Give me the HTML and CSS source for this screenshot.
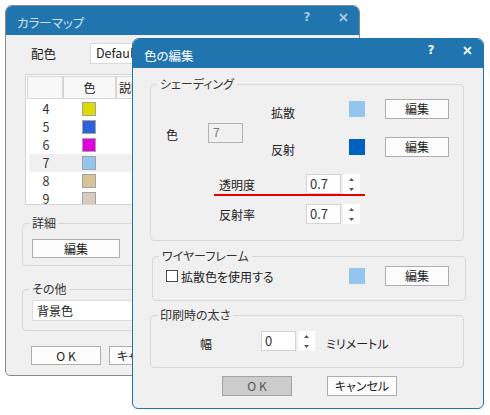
FILE: index.html
```html
<!DOCTYPE html>
<html lang="ja">
<head>
<meta charset="utf-8">
<title>色の編集</title>
<link rel="stylesheet" href="styles.css">
</head>
<body>
<div class="desk">
  <section class="win back">
    <header class="titlebar">
      <span class="title">カラーマップ</span>
      <span class="tb-icons">
        <span class="tb-btn tb-help">?</span>
        <span class="tb-btn"><svg class="tb-x" width="9" height="9" viewBox="0 0 9 9"><path d="M1 1L8 8M8 1L1 8"/></svg></span>
      </span>
    </header>
    <div class="body back-body">
      <div class="scheme"><span class="scheme-lbl">配色</span><div class="combo">Default</div></div>
      <div class="table">
        <div class="thead"><div class="th h1"></div><div class="th h2">色</div><div class="th h3">説明</div></div>
        <div class="tr"><span class="c1">4</span><span class="c2"><i class="sw" style="background:#dcdc00"></i></span></div>
        <div class="tr"><span class="c1">5</span><span class="c2"><i class="sw" style="background:#2b61dc"></i></span></div>
        <div class="tr"><span class="c1">6</span><span class="c2"><i class="sw" style="background:#e000e0"></i></span></div>
        <div class="tr sel"><span class="c1">7</span><span class="c2"><i class="sw" style="background:#92c6ef"></i></span></div>
        <div class="tr"><span class="c1">8</span><span class="c2"><i class="sw" style="background:#d9c496"></i></span></div>
        <div class="tr"><span class="c1">9</span><span class="c2"><i class="sw" style="background:#d9cbbf"></i></span></div>
      </div>
      <fieldset class="grp bgrp detail"><legend>詳細</legend>
        <div class="gin detail-in"><button class="btn btn-wide">編集</button></div>
      </fieldset>
      <fieldset class="grp bgrp other"><legend>その他</legend>
        <div class="gin other-in"><div class="field bg-field">背景色</div></div>
      </fieldset>
      <div class="back-btns"><button class="btn btn-ok">O K</button><button class="btn btn-cancel">キャンセル</button></div>
    </div>
  </section>

  <section class="win front">
    <header class="titlebar">
      <span class="title">色の編集</span>
      <span class="tb-icons">
        <span class="tb-btn tb-help">?</span>
        <span class="tb-btn"><svg class="tb-x" width="9" height="9" viewBox="0 0 9 9"><path d="M1 1L8 8M8 1L1 8"/></svg></span>
      </span>
    </header>
    <div class="body front-body">
      <fieldset class="grp fgrp shading"><legend>シェーディング</legend>
        <div class="gin shading-in">
          <div class="color-grid">
            <span class="lbl color-lbl">色</span>
            <div class="field dis-field">7</div>
            <span class="lbl l-diff">拡散</span>
            <i class="fsw sw-diff"></i>
            <button class="btn btn-edit">編集</button>
            <span class="lbl l-refl">反射</span>
            <i class="fsw sw-refl"></i>
            <button class="btn btn-edit">編集</button>
          </div>
          <div class="spin-row marked">
            <span class="lbl spin-lbl">透明度</span>
            <div class="field num">0.7</div>
            <svg class="spin" width="17" height="20" viewBox="0 0 17 20"><path d="M6 7h5l-2.5-3zM6 14h5l-2.5 3z"/></svg>
          </div>
          <div class="spin-row second">
            <span class="lbl spin-lbl">反射率</span>
            <div class="field num">0.7</div>
            <svg class="spin" width="17" height="20" viewBox="0 0 17 20"><path d="M6 7h5l-2.5-3zM6 14h5l-2.5 3z"/></svg>
          </div>
        </div>
      </fieldset>

      <fieldset class="grp fgrp wire"><legend>ワイヤーフレーム</legend>
        <div class="gin wire-in">
          <label class="chk"><i class="box"></i><span>拡散色を使用する</span></label>
          <i class="fsw sw-diff"></i>
          <button class="btn btn-edit">編集</button>
        </div>
      </fieldset>

      <fieldset class="grp fgrp print"><legend>印刷時の太さ</legend>
        <div class="gin print-in">
          <span class="lbl width-lbl">幅</span>
          <div class="field num">0</div>
          <svg class="spin" width="17" height="20" viewBox="0 0 17 20"><path d="M6 7h5l-2.5-3zM6 14h5l-2.5 3z"/></svg>
          <span class="lbl unit">ミリメートル</span>
        </div>
      </fieldset>

      <div class="front-btns"><button class="btn btn-ok default">O K</button><button class="btn btn-cancel">キャンセル</button></div>
    </div>
  </section>
</div>
</body>
</html>
```

FILE: styles.css
```css
* { box-sizing: border-box; }
html, body { margin: 0; padding: 0; background: #fff; }
body {
  font-family: "Noto Sans CJK JP", "Noto Sans", sans-serif;
  font-size: 12px;
  line-height: 14px;
  color: #222;
  font-feature-settings: "palt";
}
.desk { position: relative; width: 490px; height: 415px; overflow: hidden; }

/* windows */
.win { position: absolute; display: flex; flex-direction: column; overflow: hidden; background: #f0f0f0; }
.back { left: 5px; top: 5px; width: 355px; height: 371px; border: 1px solid #8a8a8a; border-radius: 7px 7px 5px 5px; }
.front { left: 132px; top: 38px; width: 352px; height: 371px; border: 1px solid #1f74ad; border-radius: 7px 7px 6px 6px; }

.titlebar { flex: none; height: 29px; background: #2075ae; display: flex; align-items: flex-start; }
.title { padding: 9px 0 0 11px; font-size: 12.5px; line-height: 16px; color: #fff; }
.back .title { color: #d5e2ee; }
.tb-icons { margin-left: auto; margin-right: 6px; display: flex; gap: 16px; padding-top: 4px; }
.tb-btn { width: 20px; height: 14px; display: flex; align-items: center; justify-content: center; }
.tb-help { font-family: "DejaVu Sans", sans-serif; font-weight: bold; font-size: 12px; line-height: 14px; color: #f2f6fa; }
.tb-x { stroke: #f2f6fa; stroke-width: 1.8; fill: none; }
.back .tb-help { color: #a9c4dc; }
.back .tb-x { stroke: #a9c4dc; }

.body { flex: 1; display: flex; flex-direction: column; align-items: flex-start; }

/* generic controls */
.btn {
  font-family: inherit; font-size: 12px; line-height: 14px; color: #222;
  background: #fdfdfd; border: 1px solid #adadad; padding: 0; margin: 0;
  font-feature-settings: "palt";
}
.field { background: #fff; border: 1px solid #d3d3d3; }
.lbl { color: #222; }

.grp { margin: 0; padding: 0; border: 1px solid #d6d6d6; border-radius: 4px; min-width: 0; }
.grp legend { margin-left: 6px; padding: 0 3px; font-size: 12px; line-height: 14px; color: #333; }

/* back window */
.back-body { padding-left: 16px; }
.scheme { margin-top: 8px; margin-left: 9px; display: flex; align-items: center; }
.scheme-lbl { width: 59px; font-size: 12.5px; }
.combo { width: 250px; height: 21px; background: #fff; border: 1px solid #d9d9d9; padding: 2px 0 0 5px; font-size: 12.5px; color: #222; }

.table { margin-top: 10px; margin-left: 3px; width: 320px; height: 131px; border: 1px solid #d4d4d4; background: #fff; padding: 1px; overflow: hidden; }
.thead { display: flex; height: 23px; }
.th { border: 1px solid #d6d6d6; background: #f8f8f8; display: flex; align-items: center; justify-content: center; font-size: 12px; }
.h1 { width: 36px; }
.h2 { width: 53px; }
.h3 { flex: 1; justify-content: flex-start; padding-left: 2px; }
.tr { display: flex; align-items: center; height: 18px; margin-left: 2px; }
.thead + .tr { margin-top: 1px; }
.tr.sel { background: #f0f0f0; }
.c1 { width: 34px; text-align: center; font-size: 12.5px; color: #333; }
.c2 { width: 51px; display: flex; justify-content: center; }
.sw { display: block; width: 14px; height: 14px; border: 1px solid #a3a3a3; }

.bgrp { width: 320px; }
.detail { margin-top: 11px; }
.detail-in { padding: 9px 0 7px 9px; }
.btn-wide { width: 88px; height: 19px; display: block; }
.other { margin-top: 16px; }
.other-in { padding: 4px 0 9px 9px; }
.bg-field { width: 280px; height: 21px; padding: 3px 0 0 4px; border-color: #dcdcdc; }
.back-btns { margin-top: 15px; margin-left: 9px; display: flex; gap: 8px; }
.back-btns .btn { width: 70px; height: 19px; }

/* front window */
.front-body { padding-left: 17px; }
.fgrp { width: 314px; }
.shading { margin-top: 9px; }
.shading-in { padding: 8px 0 16px 15px; }
.color-grid {
  display: grid;
  grid-template-columns: 42px 63px 78px 36px 64px;
  grid-template-rows: 20px 20px;
  row-gap: 18px;
}
.color-lbl { grid-column: 1; grid-row: 1 / 3; margin-top: 29px; }
.dis-field { grid-column: 2; grid-row: 1 / 3; margin-top: 24px; width: 35px; height: 20px; background: #f0f0f0; border-color: #b3b3b3; color: #7a7a7a; padding: 0 0 0 4px; font-size: 12px; line-height: 16px; }
.l-diff { grid-column: 3; grid-row: 1; margin-top: 7px; }
.l-refl { grid-column: 3; grid-row: 2; margin-top: 6px; }
.fsw { display: block; width: 16px; height: 16px; margin-top: 2px; }
.sw-diff { background: #92c6ef; }
.sw-refl { background: #0060c0; }
.btn-edit { width: 64px; height: 20px; }

.spin-row { display: flex; align-items: flex-start; margin-left: 48px; width: 151px; }
.spin-row.marked { margin-top: 17px; border-bottom: 2px solid #e80000; }
.spin-row.second { margin-top: 8px; }
.spin-lbl { width: 92px; padding: 4px 0 0 5px; }
.num { width: 35px; height: 20px; padding: 0 0 0 3px; font-size: 13px; line-height: 18px; color: #333; }
.spin { display: block; margin-left: 2px; background: #fff; fill: #555; flex: none; }

.wire { margin-top: 8px; margin-left: 2px; }
.wire-in { padding: 3px 0 14px 13px; display: flex; align-items: center; }
.chk { width: 183px; display: flex; align-items: center; gap: 3px; }
.chk span { padding-top: 2px; }
.box { display: block; width: 12px; height: 12px; border: 1px solid #4a4a4a; background: #fff; }
.wire-in .fsw { margin-top: 0; }
.wire-in .btn-edit { margin-left: 20px; }

.print { margin-top: 7px; }
.print-in { padding: 9px 0 16px 49px; display: flex; align-items: flex-start; }
.width-lbl { width: 61px; padding-top: 6px; }
.unit { margin-left: 11px; padding-top: 6px; }

.front-btns { margin-top: 8px; margin-left: 72px; display: flex; gap: 35px; }
.front-btns .btn { width: 70px; height: 20px; }
.btn.default { background: #cccccc; border-color: #a3a3a3; color: #555; }
```
